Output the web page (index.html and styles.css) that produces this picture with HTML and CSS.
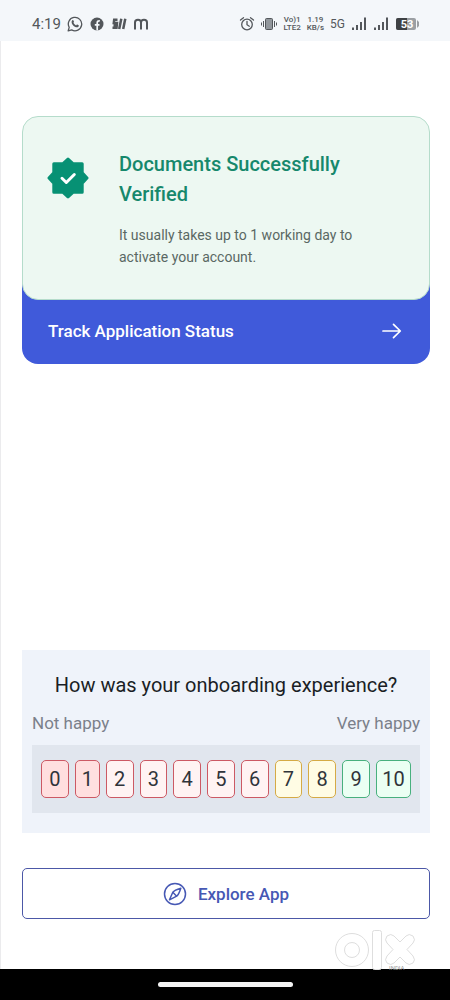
FILE: index.html
```html
<!DOCTYPE html>
<html lang="en">
<head>
<meta charset="utf-8">
<meta name="viewport" content="width=device-width, initial-scale=1">
<title>Application status</title>
<link rel="stylesheet" href="styles.css">
</head>
<body>
<div class="screen">
  <header class="status-bar">
    <div class="status-left">
      <span class="clock">4:19</span>
      <svg class="icon-s" viewBox="0 0 16 16" aria-hidden="true"><path d="M1.2 14.8l1-3.4A6.7 6.7 0 1 1 4.7 13.900z" fill="none" stroke="currentColor" stroke-width="1.300" stroke-linejoin="round"/><path d="M5.300 4.300c.5-.5 1-.3 1.200.2l.5 1.200c.1.400-.3.800-.6 1.100.6 1.200 1.500 2 2.700 2.600.5-.4.700-1 1.200-.8l1.300.7c.5.300.1 1.300-.4 1.700-1.400 1-3.800-.2-5-1.500-1.300-1.300-2.400-3.700-.9-5.200z" fill="currentColor"/></svg>
      <svg class="icon-s" viewBox="0 0 16 16" aria-hidden="true"><circle cx="8" cy="8" r="6.500" fill="currentColor"/><path d="M8.200 14.500V7c0-1.600.8-2.300 2.600-2.100M5.800 8.800h4.700" fill="none" stroke="#f4f7fa" stroke-width="1.700"/></svg>
      <svg class="icon-s" viewBox="0 0 16 16" aria-hidden="true"><g fill="none" stroke="currentColor" stroke-width="2.500"><path d="M6.500 3.800H3.200L2.800 7h3.200l-.5 4.800H1.500M2.500 9.500h4"/><path d="M10.300 2.800L8.200 13M14.300 2.800L12.200 13"/></g></svg>
      <svg class="icon-s" viewBox="0 0 16 16" aria-hidden="true"><path d="M2 13.500V6.500Q2 3.800 5 3.800T8 6.500v7M8 6.500Q8 3.800 11 3.800t3 2.700v7" fill="none" stroke="currentColor" stroke-width="2"/></svg>
    </div>
    <div class="status-right">
      <svg class="icon-s" viewBox="0 0 16 16" aria-hidden="true"><g fill="none" stroke="currentColor" stroke-width="1.300" stroke-linecap="round"><circle cx="8" cy="8.500" r="5.300"/><path d="M8 5.300v3.400l2.300 1.500M1.500 4l3-2.300M14.500 4l-3-2.300"/></g></svg>
      <svg class="icon-s" viewBox="0 0 16 16" aria-hidden="true"><rect x="4.500" y="2.500" width="7" height="11" rx="1" fill="#92979c" stroke="currentColor"/><path d="M2.500 5v6M.5 6.500v3M13.500 5v6M15.500 6.500v3" stroke="currentColor"/></svg>
      <span class="stack"><span>Vo)1</span><span>LTE2</span></span>
      <span class="stack"><span>1.19</span><span>KB/s</span></span>
      <span class="network">5G</span>
      <svg class="icon-s" viewBox="0 0 16 16" aria-hidden="true"><path d="M2 11.500V14M6 9v5M10 6v8M14 1.500V14" stroke="currentColor" stroke-width="2"/></svg>
      <svg class="icon-s signal" viewBox="0 0 16 16" aria-hidden="true"><path d="M2 11.500V14M6 9v5M10 6v8M14 1.500V14" stroke="currentColor" stroke-width="2"/></svg>
      <svg class="battery" viewBox="0 0 24 12" role="img" aria-label="Battery 53 percent"><rect width="20" height="12" rx="2" fill="#9b9fa3"/><path d="M2 0h9v12H2a2 2 0 0 1-2-2V2a2 2 0 0 1 2-2z" fill="#3e4144"/><path d="M21 2l2 2v4l-2 2z" fill="#9b9fa3"/><text x="11" y="10" class="battery-text">53</text></svg>
    </div>
  </header>

  <main class="content">
    <section class="card">
      <div class="verified">
        <svg class="badge" viewBox="0 0 42 42" aria-hidden="true"><path d="M21 2l5.200 4.800h9v9L40 21l-4.800 5.200v9h-9L21 40l-5.200-4.800h-9v-9L2 21l4.800-5.200v-9h9z" fill="#079174" stroke="#079174" stroke-width="3" stroke-linejoin="round"/><path d="M15 21.300l4.300 4.200 8-8" fill="none" stroke="#fff" stroke-width="3" stroke-linecap="round" stroke-linejoin="round"/></svg>
        <div>
          <h1 class="verified-title">Documents Successfully Verified</h1>
          <p class="verified-text">It usually takes up to 1 working day to activate your account.</p>
        </div>
      </div>
      <a class="track" href="#">Track Application Status
        <svg class="arrow" viewBox="0 0 20 18" aria-hidden="true"><path d="M1 9h17M11.500 2.300L18.300 9l-6.800 6.700" fill="none" stroke="currentColor" stroke-width="1.700" stroke-linecap="round" stroke-linejoin="round"/></svg>
      </a>
    </section>

    <section class="survey">
      <h2 class="question" id="question">How was your onboarding experience?</h2>
      <div class="legend"><span>Not happy</span><span>Very happy</span></div>
      <div class="scale" role="group" aria-labelledby="question">
        <button class="score low" type="button">0</button>
        <button class="score low slim" type="button">1</button>
        <button class="score poor" type="button">2</button>
        <button class="score poor" type="button">3</button>
        <button class="score poor" type="button">4</button>
        <button class="score poor" type="button">5</button>
        <button class="score poor" type="button">6</button>
        <button class="score fair" type="button">7</button>
        <button class="score fair" type="button">8</button>
        <button class="score good" type="button">9</button>
        <button class="score good wide" type="button">10</button>
      </div>
    </section>

    <button class="explore" type="button">
      <svg class="compass" viewBox="0 0 24 24" aria-hidden="true"><g fill="none" stroke="currentColor" stroke-width="1.500" stroke-linejoin="round"><circle cx="12" cy="12" r="10.500"/><path d="M17.800 6.200Q11.500 8 9.800 10.300L6.500 17.800 13.700 14.200Q16 12 17.800 6.200z"/><path d="M9.800 10.300l3.900 3.900"/></g></svg>
      Explore App
    </button>
  </main>

  <svg class="watermark" viewBox="0 0 82 42" role="img" aria-label="OLX India"><g fill="#fff" stroke="#dedede"><circle cx="18" cy="21" r="16.500"/><circle cx="18" cy="21" r="7.500"/><rect x="38.500" y="1.500" width="9" height="39" rx="2"/><path d="M53 7q4-3 7 0l6 6 6-6q3-3 7 0 3 4 0 7l-6 6.500 6 6.500q3 4 0 7-4 3-7 0l-6-6-6 6q-3 3-7 0-3-3 0-7l6-6.500-6-6.500q-3-3 0-7z"/></g><text x="55" y="41" class="watermark-text">INDIA</text></svg>

  <footer class="nav-bar"><span class="nav-handle"></span></footer>
</div>
</body>
</html>
```
FILE: styles.css
```css
* {
  box-sizing: border-box;
}

body {
  margin: 0;
  font-family: Roboto, "Liberation Sans", sans-serif;
  background: #fff;
}

.screen {
  display: flex;
  flex-direction: column;
  min-height: 100vh;
  position: relative;
}

.status-bar {
  display: flex;
  justify-content: space-between;
  align-items: center;
  height: 41px;
  padding: 6px 30px 0 32px;
  background: #f4f7fa;
  color: #53575b;
}

.status-left,
.status-right {
  display: flex;
  align-items: center;
  gap: 6px;
}

.clock {
  font-size: 15px;
}

.icon-s {
  width: 16px;
  height: 16px;
}

.signal {
  margin-right: 1px;
}

.stack {
  display: flex;
  flex-direction: column;
  font-size: 8px;
  line-height: 8px;
  font-weight: 500;
  text-align: center;
}

.network {
  font-size: 12px;
}

.battery {
  width: 24px;
  height: 12px;
}

.battery-text {
  font-size: 11px;
  font-weight: 700;
  text-anchor: middle;
  fill: #fff;
}

.content {
  flex: 1;
  display: flex;
  flex-direction: column;
  padding: 75px 20px 50px 21px;
  border-left: 1px solid #ebebed;
}

.card {
  background: linear-gradient(transparent 50%, #405ada 50%);
  border-radius: 16px;
}

.verified {
  display: flex;
  gap: 30px;
  padding: 32px 56px 31px 24px;
  background: #edf8f2;
  border: 1px solid #b5dccb;
  border-radius: 16px;
}

.badge {
  flex: none;
  width: 42px;
  height: 42px;
  margin-top: 8px;
}

.verified-title {
  margin: 0 0 15px;
  font-size: 20px;
  line-height: 30px;
  font-weight: 500;
  color: #16886c;
}

.verified-text {
  margin: 0;
  font-size: 14px;
  line-height: 22px;
  color: #5a6864;
}

.track {
  display: flex;
  justify-content: space-between;
  align-items: center;
  height: 64px;
  padding: 0 28px 2px 26px;
  font-size: 17px;
  font-weight: 500;
  color: #fff;
  text-decoration: none;
}

.arrow {
  width: 20px;
  height: 18px;
}

.survey {
  margin-top: auto;
  padding: 22px 10px 20px;
  background: #eff3fa;
}

.question {
  margin: 0;
  font-size: 20px;
  line-height: 26px;
  font-weight: 400;
  text-align: center;
  color: #1a1e25;
}

.legend {
  display: flex;
  justify-content: space-between;
  margin: 14px 0 11px;
  font-size: 17px;
  line-height: 22px;
  color: #7b808a;
}

.scale {
  display: flex;
  gap: 6px;
  padding: 15px 9px;
  background: #e1e6ee;
}

.score {
  flex: 28 1 0;
  min-width: 0;
  height: 38px;
  padding: 0;
  border: 1px solid;
  border-radius: 5px;
  font-family: inherit;
  font-size: 20px;
  color: #30343a;
}

.slim {
  flex-grow: 25;
}

.wide {
  flex-grow: 36;
}

.low {
  background: #ffdfdf;
  border-color: #cc5964;
}

.poor {
  background: #fff3f3;
  border-color: #cc5964;
}

.fair {
  background: #fffce4;
  border-color: #d5aa45;
}

.good {
  background: #ebfff3;
  border-color: #48b07e;
}

.explore {
  display: flex;
  justify-content: center;
  align-items: center;
  gap: 11px;
  height: 51px;
  margin-top: 35px;
  padding: 0;
  background: #fff;
  border: 1px solid #4c58a7;
  border-radius: 5px;
  font-family: inherit;
  font-size: 17px;
  font-weight: 500;
  color: #4658b4;
}

.compass {
  width: 24px;
  height: 24px;
}

.watermark {
  position: absolute;
  right: 34px;
  bottom: 29px;
  width: 82px;
  height: 42px;
}

.watermark-text {
  font-size: 6px;
  fill: #999;
}

.nav-bar {
  display: flex;
  justify-content: center;
  align-items: center;
  height: 31px;
  background: #000;
}

.nav-handle {
  width: 30%;
  height: 5px;
  border-radius: 3px;
  background: #f4f4f4;
}
```
